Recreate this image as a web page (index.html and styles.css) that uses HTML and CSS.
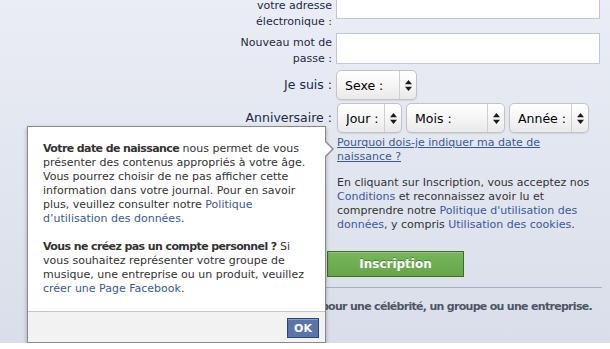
FILE: index.html
```html
<!DOCTYPE html>
<html lang="fr">
  <head>
    <meta charset="UTF-8" />
    <meta name="viewport" content="width=device-width, initial-scale=1.0" />
    <title>Inscription</title>
    <link rel="stylesheet" href="styles.css">
  </head>
  <body>
    <div class="page">
      <form class="signup">
        <label class="label">Confirmer<br />votre adresse<br />électronique :</label>
        <div class="field"><input class="text first" type="email" /></div>

        <label class="label">Nouveau mot de passe :</label>
        <div class="field"><input class="text" type="password" /></div>

        <label class="label big">Je suis :</label>
        <div class="field">
          <div class="select sexe">
            <select><option>Sexe :</option><option>Femme</option><option>Homme</option></select>
            <span class="spin"><svg width="7" height="11" viewBox="0 0 7 11"><path d="M3.5 0L7 4.3H0Z M0 6.7H7L3.5 11Z" /></svg></span>
          </div>
        </div>

        <label class="label big">Anniversaire :</label>
        <div class="field">
          <div class="birthday">
            <div class="select jour">
              <select><option>Jour :</option></select>
              <span class="spin"><svg width="7" height="11" viewBox="0 0 7 11"><path d="M3.5 0L7 4.3H0Z M0 6.7H7L3.5 11Z" /></svg></span>
            </div>
            <div class="select mois">
              <select><option>Mois :</option></select>
              <span class="spin"><svg width="7" height="11" viewBox="0 0 7 11"><path d="M3.5 0L7 4.3H0Z M0 6.7H7L3.5 11Z" /></svg></span>
            </div>
            <div class="select annee">
              <select><option>Année :</option></select>
              <span class="spin"><svg width="7" height="11" viewBox="0 0 7 11"><path d="M3.5 0L7 4.3H0Z M0 6.7H7L3.5 11Z" /></svg></span>
            </div>
          </div>
          <a class="why" href="#">Pourquoi dois-je indiquer ma date de naissance ?</a>
        </div>

        <span></span>
        <p class="terms">En cliquant sur Inscription, vous acceptez nos <a href="#">Conditions</a> et reconnaissez avoir lu et comprendre notre <a href="#">Politique d'utilisation des données</a>, y compris <a href="#">Utilisation des cookies</a>.</p>

        <span></span>
        <div class="field"><button class="submit" type="button">Inscription</button></div>
      </form>

      <p class="create-page"><a href="#">Créez une Page</a> pour une célébrité, un groupe ou une entreprise.</p>

      <div class="tip">
        <div class="tip-body">
          <p><b>Votre date de naissance</b> nous permet de vous présenter des contenus appropriés à votre âge. Vous pourrez choisir de ne pas afficher cette information dans votre journal. Pour en savoir plus, veuillez consulter notre <a href="#">Politique d’utilisation des données</a>.</p>
          <p><b>Vous ne créez pas un compte personnel ?</b> Si vous souhaitez représenter votre groupe de musique, une entreprise ou un produit, veuillez <a href="#">créer une Page Facebook</a>.</p>
        </div>
        <div class="tip-foot">
          <button class="ok" type="button">OK</button>
        </div>
      </div>
    </div>
  </body>
</html>
```

FILE: styles.css
```css
* {
  box-sizing: border-box;
}
body {
  margin: 0;
  background-color: #fff;
  font-family: "DejaVu Sans", Verdana, sans-serif;
  font-size: 11px;
  color: #333;
}
a {
  color: #3b5998;
  text-decoration: none;
}
b {
  letter-spacing: -0.6px;
}
.page {
  position: relative;
  height: 343px;
  overflow: hidden;
  background: linear-gradient(#eaedf5, #d9deea);
}

.signup {
  display: grid;
  grid-template-columns: 100px 270px;
  column-gap: 4px;
  row-gap: 3px;
  margin: -20px 0 0 232px;
}
.label {
  padding-top: 2px;
  text-align: right;
  line-height: 16px;
  color: #1c2a47;
}
.label.big {
  padding-top: 0;
  font-size: 12.5px;
  line-height: 30px;
}
.text {
  display: block;
  width: 264px;
  height: 31px;
  border: 1px solid #bdc7d8;
  background-color: #fff;
}
.text.first {
  margin-top: 8px;
}

.select {
  display: flex;
  height: 30px;
  border: 1px solid #c3c3c3;
  border-radius: 5px;
  background: linear-gradient(#fff, #f7f7f7 45%, #e9e9e9);
  box-shadow: 0 1px 1px rgba(0, 0, 0, 0.08);
}
.select select {
  flex: 1;
  min-width: 0;
  appearance: none;
  border: none;
  background: transparent;
  padding: 0 0 0 8px;
  font-family: "DejaVu Sans", Verdana, sans-serif;
  font-size: 12.5px;
  color: #000;
}
.spin {
  display: flex;
  align-items: center;
  justify-content: center;
  width: 17px;
  border-left: 1px solid #cfcfcf;
}
.spin path {
  fill: #1a1a1a;
}
.sexe {
  width: 81px;
}
.birthday {
  display: flex;
  gap: 4px;
  margin-left: 1px;
}
.jour {
  width: 65px;
}
.mois {
  width: 99px;
}
.annee {
  width: 80px;
}
.why {
  display: block;
  width: 252px;
  margin: 3px 0 0 1px;
  line-height: 14px;
  text-decoration: underline;
}

.terms {
  width: 268px;
  margin: 9px 0 0 1px;
  line-height: 14px;
}
.submit {
  width: 137px;
  height: 26px;
  margin: 16px 0 0 -9px;
  border: 1px solid #3b6e22;
  background: linear-gradient(#78b65c, #67a54b);
  box-shadow: inset 0 1px 0 #8fc776;
  color: #fff;
  font-family: "DejaVu Sans", Verdana, sans-serif;
  font-size: 12px;
  font-weight: bold;
  text-shadow: 0 -1px 0 #4c8834;
}

.create-page {
  margin: 10px 8px 0 27px;
  padding: 12px 10px 0 0;
  border-top: 1px solid #a4aec6;
  text-align: right;
  line-height: 14px;
  font-weight: bold;
  letter-spacing: -0.7px;
  color: #4e5665;
}
.create-page a {
  color: #3b5998;
}

.tip {
  position: absolute;
  left: 27px;
  top: 126px;
  width: 299px;
  height: 217px;
  border: 1px solid #8b8b8b;
  background-color: #fff;
  box-shadow: 0 2px 4px rgba(0, 0, 0, 0.3);
}
.tip::before,
.tip::after {
  content: "";
  position: absolute;
  top: 14px;
  border-style: solid;
  border-color: transparent;
}
.tip::before {
  right: -9px;
  border-width: 8px 0 8px 8px;
  border-left-color: #8b8b8b;
}
.tip::after {
  right: -7px;
  top: 15px;
  border-width: 7px 0 7px 7px;
  border-left-color: #fff;
}
.tip-body {
  height: 184px;
  padding: 15px 7px 0 15px;
  line-height: 14px;
}
.tip-body p {
  margin: 0 0 14px;
}
.tip-foot {
  display: flex;
  justify-content: flex-end;
  height: 31px;
  padding: 6px 6px 0 0;
  border-top: 1px solid #c4c4c4;
  background-color: #f2f2f2;
}
.ok {
  width: 32px;
  height: 20px;
  padding: 0;
  border: 1px solid #29447e;
  background-color: #5b74a8;
  box-shadow: inset 0 1px 0 #8a9cc2;
  color: #fff;
  font-family: "DejaVu Sans", Verdana, sans-serif;
  font-size: 11px;
  font-weight: bold;
}
```
